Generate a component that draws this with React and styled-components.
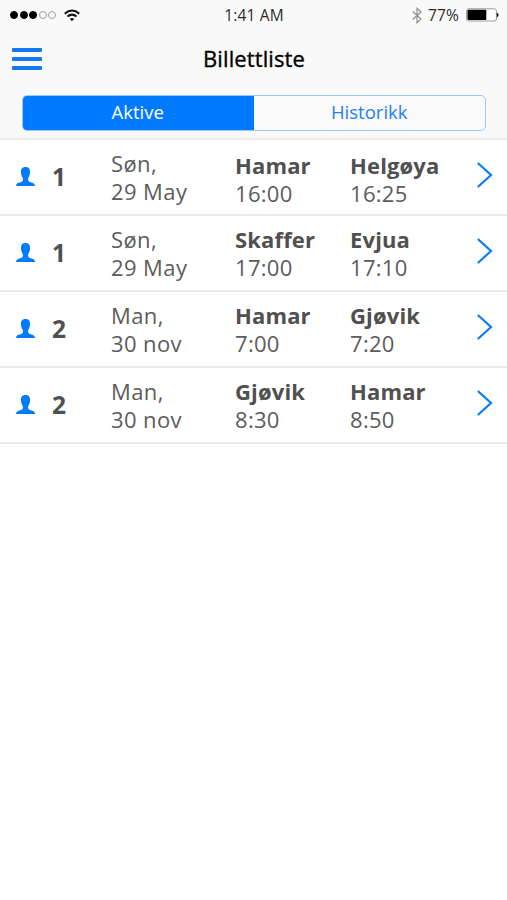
import React from "react";
import styled, { createGlobalStyle } from "styled-components";

const GlobalStyle = createGlobalStyle`
  * { box-sizing: border-box; }
  body { margin: 0; background: #fff; font-family: "Open Sans", "Noto Sans", sans-serif; }
`;

const Screen = styled.div`
  width: 507px;
  height: 900px;
  overflow: hidden;
  background: #fff;
`;

const Header = styled.header`
  height: 140px;
  background: #f9f9f9;
  border-bottom: 2px solid #ebebeb;
`;

const StatusBar = styled.div`
  height: 30px;
  padding: 0 8px 0 10px;
  display: grid;
  grid-template-columns: 1fr auto 1fr;
  align-items: center;
`;

const Signal = styled.div`
  display: flex;
  align-items: center;
`;

const Dots = styled.div`
  display: flex;
  gap: 1.5px;
  margin-right: 8px;
`;

const Dot = styled.i`
  width: 8px;
  height: 8px;
  border-radius: 50%;
  background: ${(p) => (p.$on ? "#000" : "transparent")};
  border: 1px solid ${(p) => (p.$on ? "#000" : "#a0a0a0")};
`;

const Clock = styled.div`
  font-size: 15.5px;
  line-height: 30px;
  letter-spacing: 0.15px;
  margin-right: 1px;
  color: #2c2c2c;
`;

const Power = styled.div`
  display: flex;
  align-items: center;
  justify-content: flex-end;
  gap: 6px;
`;

const TitleBar = styled.div`
  height: 58px;
  padding: 0 12px;
  display: grid;
  grid-template-columns: 1fr auto 1fr;
  align-items: center;
`;

const MenuButton = styled.button`
  width: 30px;
  height: 22px;
  padding: 0;
  border: 0;
  background: none;
  display: flex;
  flex-direction: column;
  justify-content: space-between;
`;

const MenuLine = styled.span`
  width: 30px;
  height: 4px;
  background: #1479ee;
  border-radius: 1px;
`;

const Title = styled.h1`
  margin: 0;
  padding: 0 0 2px 1px;
  font-size: 22px;
  line-height: 30px;
  font-weight: 500;
  letter-spacing: 0.1px;
  -webkit-text-stroke: 0.35px #000;
  color: #000;
`;

const Tabs = styled.div`
  margin: 7px 21px 0 22px;
  height: 36px;
  display: flex;
  border: 1px solid #9accfa;
  border-radius: 5px;
  overflow: hidden;
  background: #fafafa;
`;

const Tab = styled.button`
  flex: 1;
  margin: ${(p) => (p.$active ? "-1px 0 -1px -1px" : "0")};
  padding: 0 0 3px;
  border: 0;
  background: ${(p) => (p.$active ? "#007aff" : "transparent")};
  color: ${(p) => (p.$active ? "#fff" : "#257fee")};
  font: 400 18.5px/30px "Open Sans", sans-serif;
`;

const Row = styled.li`
  height: 76px;
  border-bottom: 2px solid #ebebeb;
  display: grid;
  grid-template-columns: 36px 75px 124px 115px 1fr 15px;
  padding: 0 15px 0 0;
  color: #505050;
`;

const List = styled.ul`
  margin: 0;
  padding: 0;
  list-style: none;
`;

const IconCell = styled.div`
  padding: ${(p) => p.$top}px 0 0 ${(p) => p.$left || 0}px;
  svg { display: block; }
`;

const Count = styled.div`
  padding: 19px 0 0 16px;
  font-size: 24.5px;
  line-height: 36px;
  font-weight: 700;
`;

const Day = styled.div`
  padding-top: 9px;
  font-size: 22px;
  line-height: 28px;
  letter-spacing: 0.4px;
  color: #5c5c5c;
`;

const Stop = styled.div`
  padding-top: ${(p) => (p.$first ? 11 : 9)}px;
  font-size: 22px;
  line-height: 28px;
  letter-spacing: 0.3px;
  color: #5c5c5c;
`;

const Place = styled.div`
  font-weight: 700;
  letter-spacing: 0.15px;
  color: #505050;
`;

const Wifi = () => (
  <svg width="16" height="13" viewBox="0 0 16 13" fill="none" stroke="#111" strokeWidth="2">
    <path d="M0.7 4.7Q8-1.7 15.3 4.7" />
    <path d="M3.5 7.6Q8 3.6 12.5 7.6" />
    <path d="M5.8 9.8Q8 8 10.2 9.8L8 12.2Z" fill="#111" stroke="none" />
  </svg>
);

const Bluetooth = () => (
  <svg width="10" height="17" viewBox="0 0 10 17" fill="none" stroke="#8e8e8e" strokeWidth="1.2">
    <path d="M0.7 4.5L9 12L5 15.7V1.3L9 5L0.7 12.5" />
  </svg>
);

const Battery = () => (
  <svg width="33" height="14" viewBox="0 0 33 14">
    <rect x="0.6" y="0.8" width="29.8" height="12.2" rx="2" fill="#fff" stroke="#999" />
    <rect x="1.5" y="1.8" width="18.8" height="10.2" rx="1" fill="#000" />
    <path d="M30.8 4.5Q34.5 7 30.8 9.5Z" fill="#111" />
  </svg>
);

const Person = () => (
  <svg width="19" height="19" viewBox="0 0 19 19" fill="#007aff">
    <path d="M9.5 0C12.9 0 14.2 2.2 14 5.2C14 8 12.9 10 12.2 11V13.4C12.6 14.9 15 15 17 16C18.3 16.7 18.8 17.8 19 19H0C0.2 17.8 0.7 16.7 2 16C4 15 6.4 14.9 6.8 13.4V11C6.1 10 5 8 5 5.2C4.8 2.2 6.1 0 9.5 0Z" />
  </svg>
);

const Chevron = () => (
  <svg width="16" height="26" viewBox="0 0 16 26" fill="none" stroke="#0d7cf8" strokeWidth="2.2">
    <path d="M0.8 1L14 13L0.8 25" />
  </svg>
);

const tickets = [
  { count: 1, day: "Søn,", date: "29 May", from: "Hamar", departs: "16:00", to: "Helgøya", arrives: "16:25" },
  { count: 1, day: "Søn,", date: "29 May", from: "Skaffer", departs: "17:00", to: "Evjua", arrives: "17:10" },
  { count: 2, day: "Man,", date: "30 nov", from: "Hamar", departs: "7:00", to: "Gjøvik", arrives: "7:20" },
  { count: 2, day: "Man,", date: "30 nov", from: "Gjøvik", departs: "8:30", to: "Hamar", arrives: "8:50" },
];

export default function App() {
  return (
    <Screen>
      <GlobalStyle />
      <Header>
        <StatusBar>
          <Signal>
            <Dots>
              {[1, 2, 3, 4, 5].map((n) => <Dot key={n} $on={n <= 3} />)}
            </Dots>
            <Wifi />
          </Signal>
          <Clock>1:41 AM</Clock>
          <Power>
            <Bluetooth />
            <Clock>77%</Clock>
            <Battery />
          </Power>
        </StatusBar>
        <TitleBar>
          <MenuButton aria-label="Meny">
            <MenuLine /><MenuLine /><MenuLine />
          </MenuButton>
          <Title>Billettliste</Title>
        </TitleBar>
        <Tabs>
          <Tab $active>Aktive</Tab>
          <Tab>Historikk</Tab>
        </Tabs>
      </Header>
      <List>
        {tickets.map((t, i) => (
          <Row key={i}>
            <IconCell $top={27} $left={16}><Person /></IconCell>
            <Count>{t.count}</Count>
            <Day>{t.day}<br />{t.date}</Day>
            <Stop $first={i === 0}><Place>{t.from}</Place>{t.departs}</Stop>
            <Stop $first={i === 0}><Place>{t.to}</Place>{t.arrives}</Stop>
            <IconCell $top={22}><Chevron /></IconCell>
          </Row>
        ))}
      </List>
    </Screen>
  );
}
